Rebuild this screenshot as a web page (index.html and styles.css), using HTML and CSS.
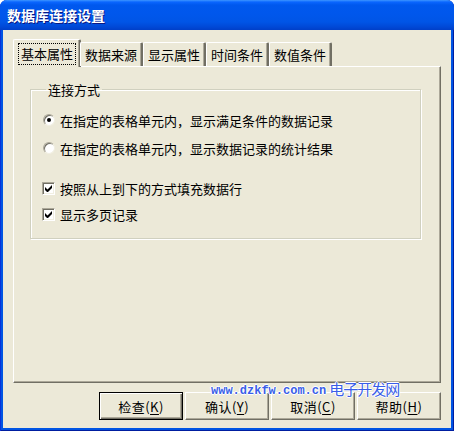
FILE: index.html
```html
<!DOCTYPE html>
<html lang="zh-CN">
<head>
  <meta charset="UTF-8">
  <title>数据库连接设置</title>
  <link rel="stylesheet" href="styles.css">
</head>
<body>
  <div class="window">
    <div class="titlebar">
      <span class="title">数据库连接设置</span>
    </div>

    <div class="client">
      <div class="tabstrip">
        <div class="tab selected"><span class="focus">基本属性</span></div>
        <div class="tab">数据来源</div>
        <div class="tab">显示属性</div>
        <div class="tab">时间条件</div>
        <div class="tab">数值条件</div>
      </div>

      <div class="panel">
        <fieldset class="group">
          <legend>连接方式</legend>

          <label class="row">
            <span class="radio checked"></span>
            在指定的表格单元内，显示满足条件的数据记录
          </label>
          <label class="row">
            <span class="radio"></span>
            在指定的表格单元内，显示数据记录的统计结果
          </label>

          <label class="row first-check">
            <span class="check">
              <svg width="7" height="7" viewBox="0 0 7 7"><path d="M0 2v3l2 2h1l4-4V0L2.5 4.5z" fill="#000"/></svg>
            </span>
            按照从上到下的方式填充数据行
          </label>
          <label class="row second-check">
            <span class="check">
              <svg width="7" height="7" viewBox="0 0 7 7"><path d="M0 2v3l2 2h1l4-4V0L2.5 4.5z" fill="#000"/></svg>
            </span>
            显示多页记录
          </label>
        </fieldset>
      </div>

      <div class="buttons">
        <button class="default">检查(<u>K</u>)</button>
        <button>确认(<u>Y</u>)</button>
        <button>取消(<u>C</u>)</button>
        <button>帮助(<u>H</u>)</button>
      </div>

      <div class="watermark">
        <span class="wm-url">www.dzkfw.com.cn</span>
        <span class="wm-name">电子开发网</span>
      </div>
    </div>
  </div>
</body>
</html>
```

FILE: styles.css
```css
body {
  margin: 0;
  background: #ffffff;
  font-family: "Noto Sans CJK SC", "Liberation Sans", sans-serif;
  font-size: 13px;
  color: #000;
}
.window {
  width: 454px;
  height: 431px;
  box-sizing: border-box;
  padding: 0 3px 3px 3px;
  border-radius: 7px 7px 0 0;
  background: #0054e3;
  box-shadow: inset 1px 0 0 #0831d9, inset -1px 0 0 #001ea0, inset 0 -1px 0 #001ea0;
  display: flex;
  flex-direction: column;
}
.titlebar {
  height: 30px;
  margin: 0 -3px;
  padding: 0 7px;
  border-radius: 7px 7px 0 0;
  background: linear-gradient(to bottom, #3d95ff 0, #0a66ff 2px, #0058ee 5px, #0057ec 14px, #0055e6 22px, #0048d6 27px, #003fc8 30px);
  display: flex;
  align-items: center;
}
.title {
  color: #fff;
  font-weight: bold;
  font-size: 14px;
  text-shadow: 1px 1px 0 #0a1883;
}
.client {
  position: relative;
  flex: 1;
  background: #ece9d8;
  padding: 8px 10px 0 10px;
}
.tabstrip {
  display: flex;
  align-items: flex-end;
  height: 28px;
  position: relative;
  z-index: 1;
}
.tab {
  height: 23px;
  padding: 0 4px;
  display: flex;
  align-items: center;
  background: #ece9d8;
  border-top: 1px solid #fff;
  border-left: 1px solid #fff;
  border-right: 2px solid;
  border-right-color: #716f64;
  box-shadow: inset -1px 0 0 #aca899;
  border-radius: 2px 2px 0 0;
  white-space: nowrap;
}
.tab.selected {
  height: 27px;
  padding: 0 4px 0 5px;
  margin-bottom: -1px;
  margin-right: -1px;
}
.focus {
  outline: 1px dotted #000;
  outline-offset: 0;
  padding: 1px 2px;
  line-height: 18px;
}
.panel {
  height: 317px;
  box-sizing: border-box;
  border-top: 1px solid #fff;
  border-left: 1px solid #fff;
  border-right: 1px solid #716f64;
  border-bottom: 1px solid #716f64;
  box-shadow: inset -1px -1px 0 #aca899;
  padding: 15px 19px 0 16px;
}
.group {
  margin: 0;
  height: 157px;
  box-sizing: border-box;
  border: 1px solid #d0d0bf;
  box-shadow: inset 1px 1px 0 #fff, 1px 1px 0 #fff;
  padding: 14px 0 0 11px;
}
.group legend {
  padding: 0 2px;
  margin-left: 4px;
  line-height: 15px;
}
.row {
  display: flex;
  align-items: center;
  height: 18px;
  gap: 5px;
  margin-bottom: 10px;
}
.row.first-check {
  margin-top: 22px;
  margin-bottom: 8px;
}
.radio {
  width: 12px;
  height: 12px;
  margin-left: 1px;
  box-sizing: border-box;
  border-radius: 50%;
  background: #fff;
  border: 1px solid;
  border-color: #aca899 #f1efe2 #f1efe2 #aca899;
  box-shadow: inset 1px 1px 0 #716f64;
  display: flex;
  align-items: center;
  justify-content: center;
}
.radio.checked::after {
  content: "";
  width: 4px;
  height: 4px;
  border-radius: 50%;
  background: #000;
}
.check {
  width: 13px;
  height: 13px;
  box-sizing: border-box;
  background: #fff;
  border: 1px solid;
  border-color: #aca899 #fff #fff #aca899;
  box-shadow: inset 1px 1px 0 #716f64, inset -1px -1px 0 #f1efe2;
  display: flex;
  align-items: center;
  justify-content: center;
}
.check svg {
  display: block;
}
.buttons {
  display: flex;
  justify-content: flex-end;
  gap: 2px;
  margin-top: 9px;
}
.buttons button {
  width: 84px;
  height: 28px;
  font-family: "Noto Sans CJK SC", "Liberation Sans", sans-serif;
  font-size: 13px;
  color: #000;
  background: #ece9d8;
  border: 1px solid;
  border-color: #fff #716f64 #716f64 #fff;
  box-shadow: inset -1px -1px 0 #aca899;
  padding: 0;
  letter-spacing: 0.5px;
}
.buttons button.default {
  border: 1px solid #000;
  box-shadow: inset 1px 1px 0 #fff, inset -1px -1px 0 #716f64, inset -2px -2px 0 #aca899;
}
.buttons u {
  text-underline-offset: 2px;
}
.watermark {
  position: absolute;
  left: 208px;
  top: 349px;
  display: flex;
  align-items: flex-end;
  gap: 3px;
  pointer-events: none;
}
.wm-url {
  font-family: "Liberation Mono", monospace;
  font-weight: bold;
  font-size: 12px;
  color: #3a5ee8;
  text-shadow: 1px 0 0 #fff, -1px 0 0 #fff, 0 1px 0 #fff, 0 -1px 0 #fff;
  line-height: 14px;
}
.wm-name {
  font-size: 15px;
  letter-spacing: -1px;
  color: #3a5ee8;
  text-shadow: 1px 0 0 #fff, -1px 0 0 #fff, 0 1px 0 #fff, 0 -1px 0 #fff;
  line-height: 19px;
}
```
